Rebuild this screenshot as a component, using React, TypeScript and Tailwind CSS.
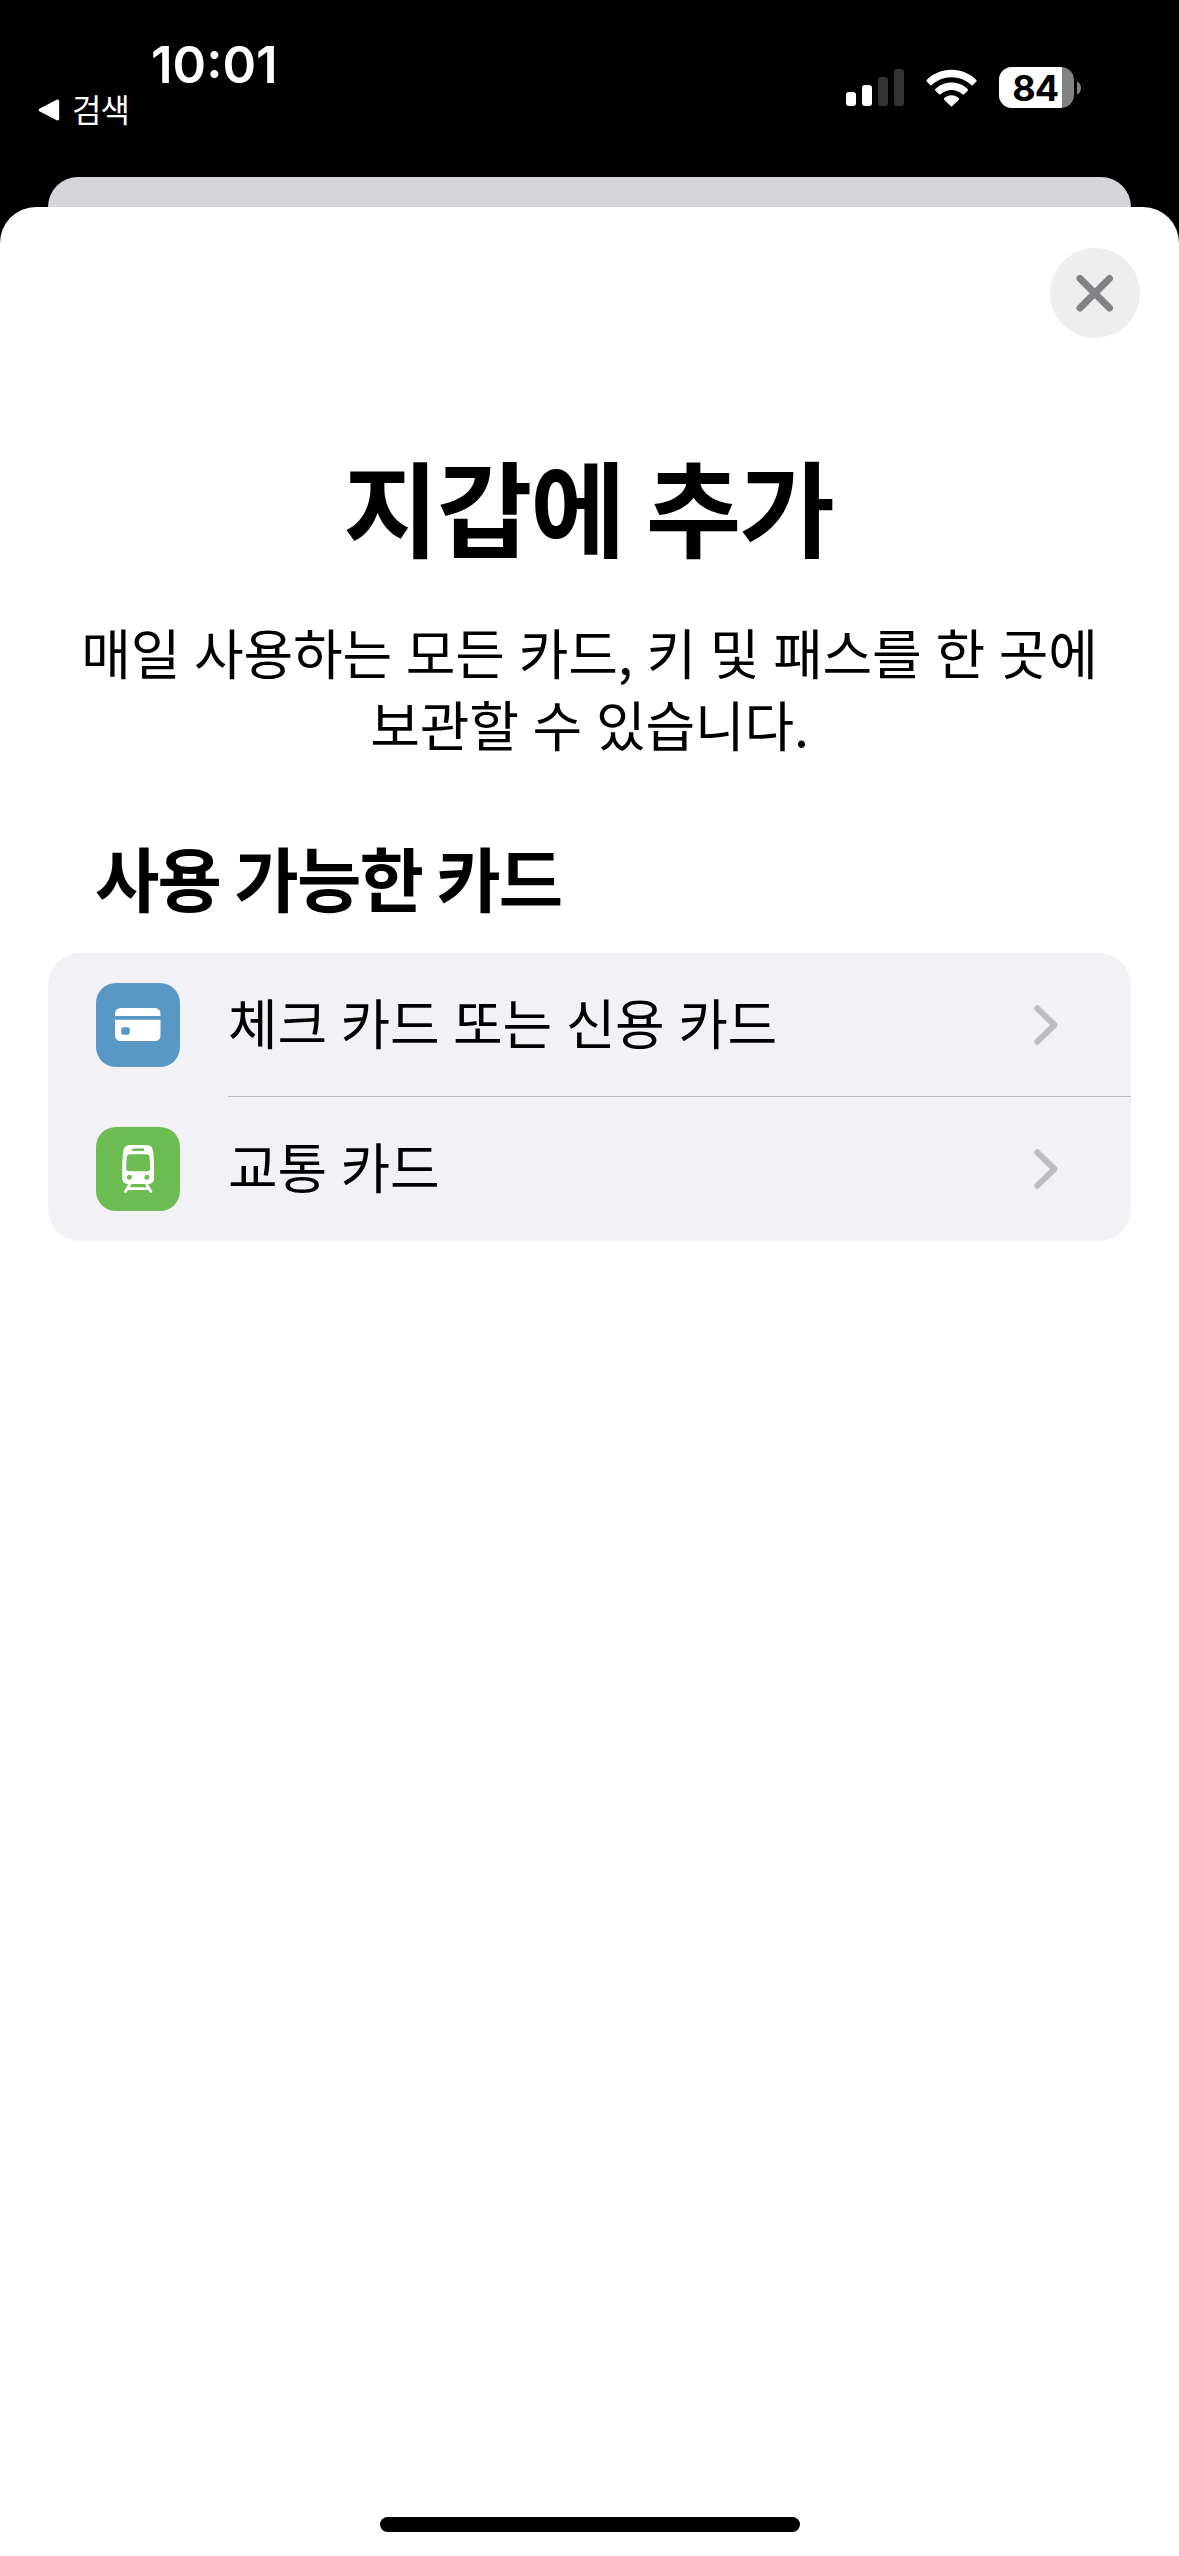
import type { ReactNode } from "react"

function BackTriangle() {
  return (
    <svg className="w-[22px] h-[22px]" viewBox="0 0 22 22">
      <path d="M2.5 11 L19.5 2.3 V19.7 Z" fill="#fff" stroke="#fff" strokeWidth="3.4" strokeLinejoin="round" />
    </svg>
  )
}

function WifiIcon() {
  return (
    <svg className="w-[51px] h-[38px]" viewBox="0 0 51 38" fill="#fff">
      <path d="M25.5 0.8C35.2 0.8 44 4.6 50.3 10.9c.5.5.5 1.2 0 1.7l-3.4 3.4c-.5.5-1.2.5-1.7 0C40 11.1 33.2 8.2 25.5 8.2S11 11.1 5.8 16c-.5.5-1.2.5-1.7 0L.7 12.6c-.5-.5-.5-1.2 0-1.7C7 4.6 15.8.8 25.5.8Z" />
      <path d="M25.5 13.6c6.2 0 11.9 2.4 16.1 6.4.5.5.5 1.2 0 1.7l-3.5 3.5c-.5.5-1.2.5-1.7 0-2.9-2.6-6.7-4.3-10.9-4.3s-8 1.7-10.9 4.3c-.5.5-1.2.5-1.7 0L9.4 21.7c-.5-.5-.5-1.2 0-1.7 4.2-4 9.9-6.4 16.1-6.4Z" />
      <path d="M25.5 26.2c2.8 0 5.4 1.1 7.3 2.9.5.5.5 1.2 0 1.7l-6.4 6.3c-.5.5-1.3.5-1.8 0l-6.4-6.3c-.5-.5-.5-1.2 0-1.7 1.9-1.8 4.5-2.9 7.3-2.9Z" />
    </svg>
  )
}

function Battery() {
  return (
    <div className="flex items-center gap-[3px]">
      <div className="flex w-[75px] h-[41px] overflow-hidden rounded-[13px] bg-[#828282]">
        <div className="flex w-[63px] items-center justify-end bg-white pr-1 font-['Inter',sans-serif] text-[36px] leading-none font-bold tracking-[-1px] text-black">
          84
        </div>
      </div>
      <svg className="w-1 h-[14px]" viewBox="0 0 4 14">
        <path d="M0 0.5C2.5 1.5 4 4 4 7S2.5 12.5 0 13.5Z" fill="#828282" />
      </svg>
    </div>
  )
}

function StatusBar() {
  return (
    <header className="flex h-[177px] justify-between text-white">
      <div className="flex flex-col pl-[38px] pt-10">
        <div className="ml-[113px] font-['Inter',sans-serif] text-[51px] leading-[50px] font-semibold">10:01</div>
        <div className="flex gap-3">
          <div className="pt-[9px]">
            <BackTriangle />
          </div>
          <span className="font-['Noto_Sans_CJK_KR',sans-serif] text-[32px] leading-[37px] tracking-[-1px]">검색</span>
        </div>
      </div>
      <div className="mt-[67px] mr-[98px] flex h-[41px] items-center">
        <div className="flex h-[37px] items-end gap-[6px]">
          <div className="w-[10px] h-[14px] rounded-[3px] bg-white" />
          <div className="w-[10px] h-[21px] rounded-[3px] bg-white" />
          <div className="w-[10px] h-[29px] rounded-[3px] bg-[#333]" />
          <div className="w-[10px] h-[37px] rounded-[3px] bg-[#333]" />
        </div>
        <div className="ml-[22px] mr-[22px]">
          <WifiIcon />
        </div>
        <Battery />
      </div>
    </header>
  )
}

function CardIcon() {
  return (
    <svg className="w-[84px] h-[84px]" viewBox="0 0 84 84" fill="#fff">
      <path d="M19 33V30.5a5.5 5.5 0 0 1 5.5-5.5h34.5a5.5 5.5 0 0 1 5.5 5.5V33Z" />
      <path fillRule="evenodd" d="M19 36.8h45.5v15.7a5.5 5.5 0 0 1-5.5 5.5H24.5a5.5 5.5 0 0 1-5.5-5.5ZM27.5 44.3a2.3 2.3 0 0 0-2.3 2.3v2.8a2.3 2.3 0 0 0 2.3 2.3h4a2.3 2.3 0 0 0 2.3-2.3v-2.8a2.3 2.3 0 0 0-2.3-2.3Z" />
    </svg>
  )
}

function TrainIcon() {
  return (
    <svg className="w-[84px] h-[84px]" viewBox="0 0 84 84">
      <path
        fill="#fff"
        fillRule="evenodd"
        d="M34.5 18h15.5c4.5 0 6.8 2.5 7.2 7 .6 6 .9 10 .9 16v10c0 3.8-2.2 6-6 6H32.2c-3.8 0-6-2.2-6-6V41c0-6 .3-10 .9-16 .4-4.5 2.9-7 7.4-7ZM37.3 21.6a1.2 1.2 0 0 0 0 2.5h9.7a1.2 1.2 0 0 0 0-2.5ZM34 27.2c-2 0-3 .9-3.2 2.9-.4 3.5-.6 7.4-.6 11.7 0 1.6.9 2.4 2.5 2.4h19c1.6 0 2.4-.8 2.4-2.4 0-4.3-.2-8.2-.6-11.7-.2-2-1.2-2.9-3.2-2.9ZM33.4 47.7a2.5 2.5 0 1 0 0 5 2.5 2.5 0 0 0 0-5ZM50.9 47.7a2.5 2.5 0 1 0 0 5 2.5 2.5 0 0 0 0-5Z"
      />
      <path d="M34 57 L29.4 64.5 M50.4 57 L54.9 64.5 M32 61.6 H52.5" fill="none" stroke="#fff" strokeWidth="2.8" strokeLinecap="round" />
    </svg>
  )
}

function Chevron() {
  return (
    <svg className="w-[24px] h-[40px]" viewBox="0 0 24 40" fill="none">
      <path d="M3.3 3.3 L20.5 20 L3.3 36.7" stroke="#bdbcc2" strokeWidth="6" strokeLinecap="round" strokeLinejoin="round" />
    </svg>
  )
}

type RowProps = {
  icon: ReactNode
  color: string
  label: string
  divider?: boolean
}

function CardRow({ icon, color, label, divider }: RowProps) {
  return (
    <button className="flex h-36 w-full items-center pl-12 text-left">
      <span className={`size-[84px] shrink-0 rounded-[20px] ${color}`}>{icon}</span>
      <span className={`ml-12 flex h-full flex-1 items-center justify-between border-b pr-[73px] ${divider ? "border-[#bdbcc2]" : "border-transparent"}`}>
        <span className="pb-[5px] text-[54px] leading-[72px] tracking-[-0.3px] [word-spacing:2px]">{label}</span>
        <Chevron />
      </span>
    </button>
  )
}

export default function App() {
  return (
    <div className="flex h-[2556px] w-[1179px] flex-col bg-black font-['Noto_Sans_CJK_KR',sans-serif] text-black">
      <StatusBar />
      {/* sheet underneath, only its top edge shows */}
      <div className="mx-12 h-[70px] shrink-0 rounded-t-[30px] bg-[#d5d4d9]" />
      <main className="relative -mt-10 flex flex-1 flex-col rounded-t-[36px] bg-white px-12">
        <button className="-mr-[9px] mt-[41px] flex size-[90px] items-center justify-center self-end rounded-full bg-[#eee]" aria-label="닫기">
          <svg className="size-[38px]" viewBox="0 0 38 38">
            <path d="M4 4.5 L33.5 34 M33.5 4.5 L4 34" stroke="#838287" strokeWidth="7" strokeLinecap="round" />
          </svg>
        </button>
        <h1 className="mt-[107px] pr-[3px] text-center text-[104px] leading-[120px] font-bold tracking-[-2px]">지갑에 추가</h1>
        <p className="mt-[51px] text-center text-[54px] leading-[72px] whitespace-nowrap tracking-[-0.2px] [word-spacing:2px]">
          매일 사용하는 모든 카드, 키 및 패스를 한 곳에
          <br />
          보관할 수 있습니다.
        </p>
        <h2 className="ml-[47px] mt-[77px] text-[70px] leading-[80px] font-bold tracking-[-1.8px]">사용 가능한 카드</h2>
        <section className="mt-9 rounded-[32px] bg-[#f2f1f6]">
          <CardRow icon={<CardIcon />} color="bg-[#5998c5]" label="체크 카드 또는 신용 카드" divider />
          <CardRow icon={<TrainIcon />} color="bg-[#6dbc51]" label="교통 카드" />
        </section>
        <div className="mt-auto mb-6 h-[15px] w-[420px] self-center rounded-full bg-black" />
      </main>
    </div>
  )
}
